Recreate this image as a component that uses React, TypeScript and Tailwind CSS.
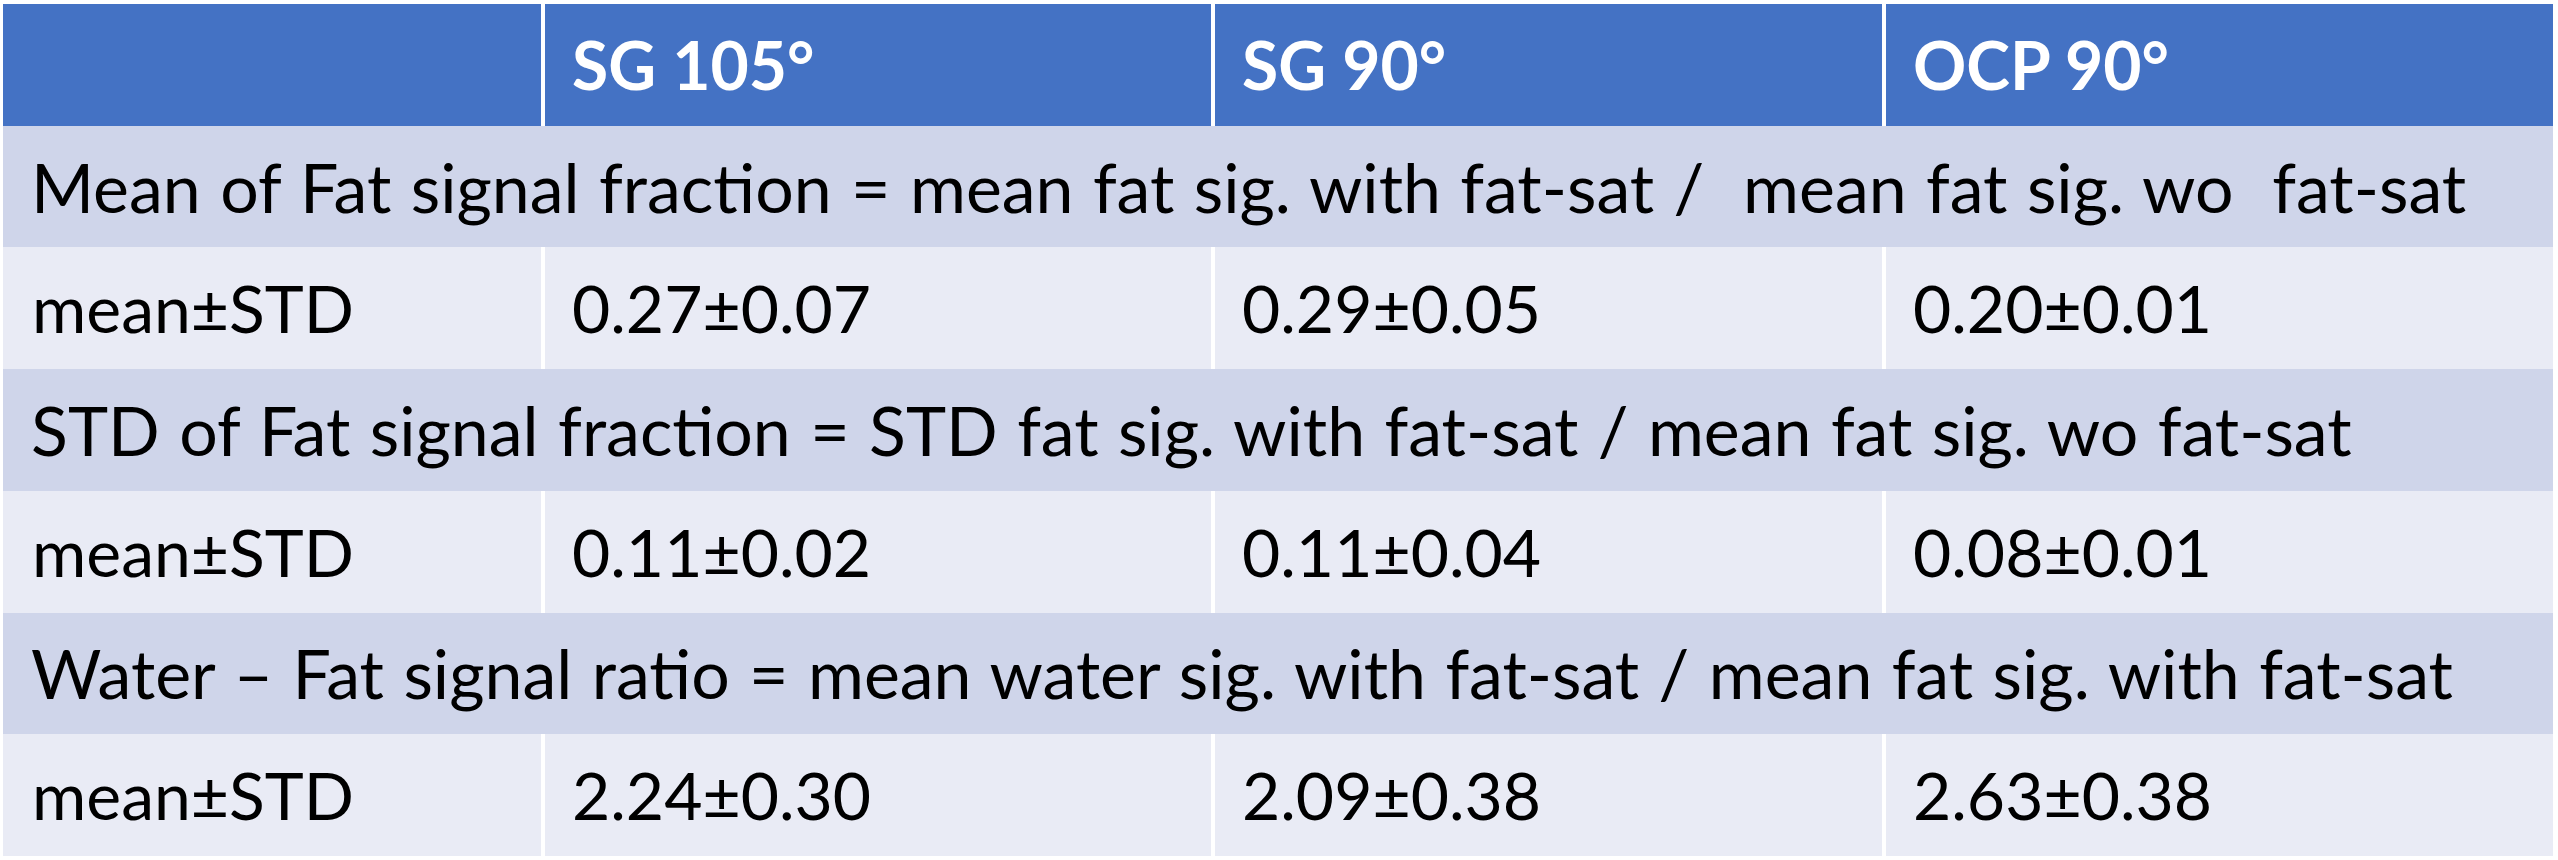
export default function App() {
  const rows: { title: string; values: string[] }[] = [
    {
      title: "Mean of Fat signal fraction = mean fat sig. with fat-sat /  mean fat sig. wo  fat-sat",
      values: ["0.27±0.07", "0.29±0.05", "0.20±0.01"],
    },
    {
      title: "STD of Fat signal fraction = STD fat sig. with fat-sat / mean fat sig. wo fat-sat",
      values: ["0.11±0.02", "0.11±0.04", "0.08±0.01"],
    },
    {
      title: "Water – Fat signal ratio = mean water sig. with fat-sat / mean fat sig. with fat-sat",
      values: ["2.24±0.30", "2.09±0.38", "2.63±0.38"],
    },
  ];
  const headers = ["SG 105°", "SG 90°", "OCP 90°"];
  return (
    <div className="w-[2558px] h-[860px] bg-white pt-[4px] pl-[3px]">
      <div className="w-[2550px] h-[852px] grid grid-cols-[538px_670px_671px_671px] grid-rows-7 font-['Lato',sans-serif] text-[66px] leading-none text-black">
        <div className="bg-[#4472c4]" />
        {headers.map((h) => (
          <div
            key={h}
            className="bg-[#4472c4] border-l-4 border-white flex items-center pl-[27px] font-bold text-white"
          >
            {h}
          </div>
        ))}
        {rows.map((r) => (
          <>
            <div
              key={r.title}
              className="col-span-4 bg-[#cfd5ea] flex items-center pl-[28px] whitespace-pre text-[68px] [word-spacing:2px]"
            >
              {r.title}
            </div>
            <div className="bg-[#e9ebf5] flex items-center pl-[29px]">mean±STD</div>
            {r.values.map((v, i) => (
              <div
                key={r.title + i}
                className="bg-[#e9ebf5] border-l-4 border-white flex items-center pl-[27px]"
              >
                {v}
              </div>
            ))}
          </>
        ))}
      </div>
    </div>
  );
}
